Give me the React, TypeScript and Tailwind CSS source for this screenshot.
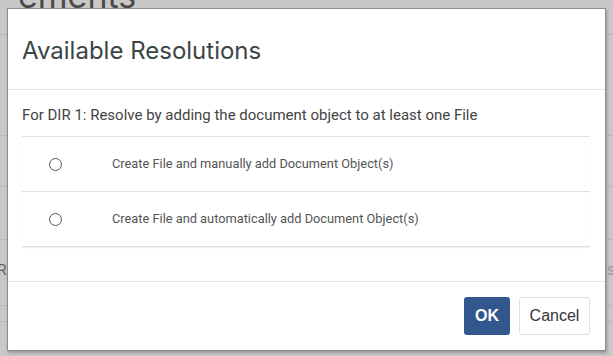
import React from "react";

const options = [
  "Create File and manually add Document Object(s)",
  "Create File and automatically add Document Object(s)",
];

export default function App() {
  return (
    <div className="relative w-[613px] h-[356px] overflow-hidden bg-[#c8c8c8] font-['Inter',sans-serif]">
      {/* page behind the overlay */}
      <div className="flex flex-col">
        <div className="h-[8px] overflow-hidden">
          <div className="-mt-[21px] ml-[18px] text-[34px] leading-[34px] text-[#4a4a4a]">ements</div>
        </div>
        <div className="h-[27px] border-b border-[#b4b4b4]" />
        <div className="h-[101px] border-b border-[#b8b8b8]" />
        <div className="h-[51px] border-b border-[#b8b8b8]" />
        <div className="h-[53px] border-b border-[#b8b8b8]" />
        <div className="flex h-[66px] items-center justify-between border-b border-[#b8b8b8] pt-[26px] pb-[30px] text-[15px] text-[#666]">
          <span className="-ml-[3px]">R</span>
          <span className="-mr-[2px] text-[#9a9a9a]">ts</span>
        </div>
        <div className="h-[16px] border-b border-[#b8b8b8]" />
      </div>

      {/* modal */}
      <div className="absolute left-[7px] top-[8px] flex h-[343px] w-[599px] flex-col border border-[#8c8c8c] bg-white shadow-[1px_2px_3px_rgba(0,0,0,0.25)]">
        <div className="flex h-[81px] items-center border-b border-[#e3e3e3] px-[14px] pt-[4px]">
          <h2 className="text-[24px] text-[#3c4545]">Available Resolutions</h2>
        </div>
        <div className="flex h-[191px] flex-col px-[14px] font-['Roboto',sans-serif]">
          <p className="h-[46px] pt-[16px] text-[15px] leading-[18px] text-[#444]">
            For DIR 1: Resolve by adding the document object to at least one File
          </p>
          <div className="w-[568px] border-t border-[#e2e2e2] shadow-[0_1px_1px_rgba(0,0,0,0.06)]">
            {options.map((o) => (
              <label key={o} className="flex h-[55px] items-center border-b border-[#e2e2e2]">
                <span className="ml-[27px] h-[13px] w-[13px] rounded-full border border-[#555] bg-white" />
                <span className="ml-[50px] text-[12.8px] text-[#555]">{o}</span>
              </label>
            ))}
          </div>
        </div>
        <div className="flex flex-1 items-start justify-end gap-[9px] border-t border-[#e3e3e3] pr-[15px] pt-[15px] font-['Liberation_Sans',Arial,sans-serif]">
          <button className="h-[38px] w-[46px] rounded-[3px] bg-[#32578c] text-[16px] font-bold text-white">OK</button>
          <button className="h-[38px] w-[71px] rounded-[3px] border border-[#e0e0e0] bg-white text-[16px] text-[#333]">Cancel</button>
        </div>
      </div>
    </div>
  );
}
